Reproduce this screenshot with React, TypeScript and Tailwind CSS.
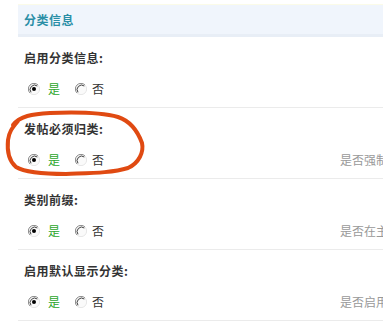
const FONT = "font-['SimSun','Noto_Sans_CJK_SC',sans-serif]";

type Row = { label: string; hint?: string };

const ROWS: Row[] = [
  { label: "启用分类信息:" },
  { label: "发帖必须归类:", hint: "是否强制发帖时选择分类" },
  { label: "类别前缀:", hint: "是否在主题前显示分类名称" },
  { label: "启用默认显示分类:", hint: "是否启用默认显示分类" },
];

function Radio({ checked }: { checked?: boolean }) {
  return (
    <svg width="12" height="12" viewBox="0 0 12 12" className="shrink-0">
      <circle cx="6" cy="6" r="5.5" fill="#fafafa" />
      <path d="M10 2 A5.5 5.5 0 0 0 2 10" fill="none" stroke="#8a8a8a" strokeWidth="1" />
      <path d="M9.3 3 A4.5 4.5 0 0 0 3 9.3" fill="none" stroke="#404040" strokeWidth="1" />
      <path d="M2 10 A5.5 5.5 0 0 0 10 2" fill="none" stroke="#e6e6e6" strokeWidth="1" />
      {checked && <circle cx="6" cy="6" r="2" fill="#000" />}
    </svg>
  );
}

function SettingRow({ label, hint }: Row) {
  return (
    <div className="border-b border-[#ebebeb] px-[6px] pt-[13px] pb-[10px]">
      <div className="text-[12px] leading-[16px] font-bold text-[#333] tracking-[0.5px]">{label}</div>
      <div className="mt-[15px] flex h-[16px] items-center text-[12px] leading-[16px]">
        <div className="flex w-[316px] items-center">
          <span className="ml-[4px]">
            <Radio checked />
          </span>
          <span className="ml-[8px] text-[#2ba62b]">是</span>
          <span className="ml-[15px]">
            <Radio />
          </span>
          <span className="ml-[5px] text-[#333]">否</span>
        </div>
        {hint && <span className="whitespace-nowrap text-[#999]">{hint}</span>}
      </div>
    </div>
  );
}

export default function App() {
  return (
    <div className={`relative h-[331px] w-[383px] overflow-hidden bg-white ${FONT}`}>
      <div className="ml-[18px] w-[500px] pt-[4px]">
        <div className="flex h-[33px] items-center border-t border-[#fbfbe8] border-b-[3px] border-b-[#e8eef6] bg-[#f0f5fc] px-[6px]">
          <span className="text-[12px] font-bold text-[#2a8ea6] tracking-[0.5px]">分类信息</span>
        </div>
        {ROWS.map((r) => (
          <SettingRow key={r.label} {...r} />
        ))}
      </div>
      <svg className="pointer-events-none absolute left-0 top-0" width="383" height="331">
        <path
          d="M13 125 C20 116 32 114 50 113 C75 112 100 112 118 117 C130 121 138 132 142 143 C144 152 139 163 128 168 C112 173 90 173 66 174 C45 174 26 173 16 167 C9 161 7 150 8 140 C9 132 12 128 18 121"
          fill="none"
          stroke="#e04a12"
          strokeWidth="4"
          strokeLinecap="round"
        />
      </svg>
    </div>
  );
}
